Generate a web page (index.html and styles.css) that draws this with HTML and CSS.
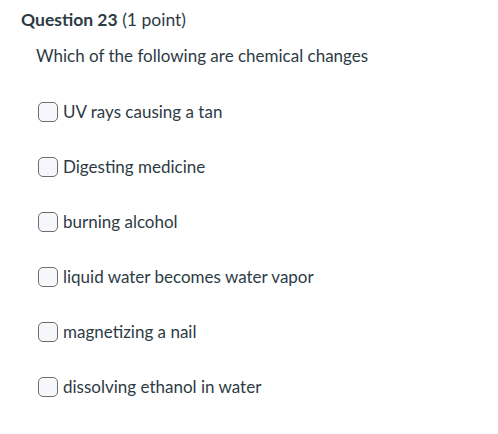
FILE: index.html
```html
<!DOCTYPE html>
<html>
<head>
<meta charset="utf-8">
<link rel="stylesheet" href="styles.css">
</head>
<body>
<div class="question">
  <h2 class="q-title"><span class="q-num">Question 23</span> <span class="q-pts">(1 point)</span></h2>
  <p class="q-text">Which of the following are chemical changes</p>
  <ul class="answers">
    <li class="answer"><span class="box"></span><span class="label">UV rays causing a tan</span></li>
    <li class="answer"><span class="box"></span><span class="label">Digesting medicine</span></li>
    <li class="answer"><span class="box"></span><span class="label">burning alcohol</span></li>
    <li class="answer"><span class="box"></span><span class="label">liquid water becomes water vapor</span></li>
    <li class="answer"><span class="box"></span><span class="label">magnetizing a nail</span></li>
    <li class="answer"><span class="box"></span><span class="label">dissolving ethanol in water</span></li>
  </ul>
</div>
</body>
</html>
```

FILE: styles.css
```css
html, body {
  margin: 0;
  padding: 0;
  background: #ffffff;
}
body {
  font-family: Lato, "Liberation Sans", sans-serif;
  color: #2d3b45;
}
.question {
  padding: 10px 0 0 21px;
}
.q-title {
  margin: 0;
  font-size: 17.5px;
  line-height: 20px;
  font-weight: normal;
}
.q-num {
  font-weight: bold;
}
.q-text {
  margin: 16px 0 0 15px;
  font-size: 17px;
  line-height: 20px;
}
.answers {
  list-style: none;
  margin: 36px 0 0 17px;
  padding: 0;
  display: flex;
  flex-direction: column;
  gap: 35px;
}
.answer {
  display: flex;
  align-items: center;
  gap: 5px;
  font-size: 17px;
  line-height: 20px;
}
.box {
  width: 18px;
  height: 18px;
  border: 1px solid #6d6d6d;
  border-radius: 5px;
  background: #f5f7fb;
  flex: none;
}
```
